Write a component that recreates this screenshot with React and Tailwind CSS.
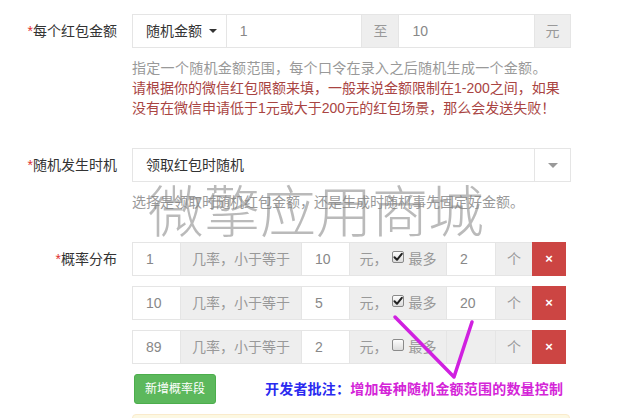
import React from "react";

const B = "border border-[#e5e5e5]";

function Caret({ color = "border-t-[#333]", size = "border-t-[4px] border-x-[4px]" }) {
  return <span className={`inline-block w-0 h-0 border-x-transparent ${size} ${color}`} />;
}

function Check({ checked }) {
  return (
    <span className="inline-flex items-center justify-center w-[12px] h-[12px] rounded-[2px] border border-[#8a8a8a] bg-gradient-to-b from-[#fdfdfd] to-[#dcdcdc] ml-[4px] mr-[5px] -translate-y-[2px]">
      {checked && (
        <svg width="10" height="10" viewBox="0 0 10 10">
          <path d="M1.5 5.2 L4 7.8 L8.8 1.8" stroke="#222" strokeWidth="2" fill="none" strokeLinecap="round" strokeLinejoin="round" />
        </svg>
      )}
    </span>
  );
}

function Label({ children }) {
  return (
    <div className="w-[117px] shrink-0 text-right text-[14px] leading-[34px] text-[#333]">
      <span className="text-[#e03030]">*</span>
      {children}
    </div>
  );
}

const rows = [
  { a: "1", b: "10", c: true, d: "2" },
  { a: "10", b: "5", c: true, d: "20" },
  { a: "89", b: "2", c: false, d: "" },
];

export default function App() {
  return (
    <div className="relative w-[628px] h-[418px] overflow-hidden bg-white font-['Liberation_Sans','Noto_Sans_CJK_SC',sans-serif] text-[14px]">
      <div className="pt-[14px]">
        {/* Row 1 */}
        <div className="flex">
          <Label>每个红包金额</Label>
          <div className="ml-[15px]">
            <div className="flex h-[34px] w-[439px]">
              <div className={`w-[95px] ${B} flex items-center pl-[13px] text-[#333]`}>
                随机金额
                <span className="ml-[7px] flex items-center">
                  <Caret />
                </span>
              </div>
              <div className={`w-[136px] ${B} border-l-0 flex items-center pl-[13px] text-[#888]`}>1</div>
              <div className={`-ml-px w-[38px] ${B} bg-[#eee] flex items-center justify-center text-[#999]`}>至</div>
              <div className={`-ml-px w-[137px] ${B} flex items-center pl-[13px] text-[#888]`}>10</div>
              <div className={`-ml-px w-[37px] ${B} bg-[#eee] flex items-center justify-center text-[#999]`}>元</div>
            </div>
            <div className="mt-[10px] leading-[20px] whitespace-nowrap">
              <div className="text-[#999] tracking-[0.3px]">指定一个随机金额范围，每个口令在录入之后随机生成一个金额。</div>
              <div className="text-[#a94442]">请根据你的微信红包限额来填，一般来说金额限制在1-200之间，如果</div>
              <div className="text-[#a94442]">没有在微信申请低于1元或大于200元的红包场景，那么会发送失败！</div>
            </div>
          </div>
        </div>

        {/* Row 2 */}
        <div className="flex mt-[30px]">
          <Label>随机发生时机</Label>
          <div className="ml-[15px]">
            <div className={`flex h-[34px] w-[439px] ${B}`}>
              <div className="flex-1 flex items-center pl-[13px] text-[#333]">领取红包时随机</div>
              <div className="w-[36px] border-l border-[#e5e5e5] flex items-center justify-center">
                <Caret color="border-t-[#999]" size="border-t-[5px] border-x-[5px]" />
              </div>
            </div>
            <div className="mt-[10px] leading-[20px] whitespace-nowrap text-[#999]">
              选择是领取时随机红包金额，还是生成时随机事先固定好金额。
            </div>
          </div>
        </div>

        {/* Row 3 */}
        <div className="flex mt-[30px]">
          <Label>概率分布</Label>
          <div className="ml-[15px]">
            {rows.map((r, i) => (
              <div key={i} className={`flex h-[34px] ${i > 0 ? "mt-[10px]" : ""}`}>
                <div className={`w-[49px] ${B} flex items-center pl-[13px] text-[#888]`}>{r.a}</div>
                <div className={`-ml-px w-[122px] ${B} bg-[#eee] flex items-center justify-center text-[#999]`}>几率，小于等于</div>
                <div className={`-ml-px w-[49px] ${B} flex items-center pl-[13px] text-[#888]`}>{r.b}</div>
                <div className={`-ml-px w-[98px] ${B} bg-[#eee] flex items-center justify-center text-[#999]`}>
                  元，
                  <Check checked={r.c} />
                  最多
                </div>
                <div className={`-ml-px w-[50px] ${B} ${r.d ? "bg-white" : "bg-[#eee]"} flex items-center pl-[13px] text-[#888]`}>{r.d}</div>
                <div className={`-ml-px w-[38px] ${B} bg-[#eee] flex items-center justify-center text-[#999]`}>个</div>
                <div className="-ml-px w-[34px] border border-[#cc4543] bg-[#cc4543] flex items-center justify-center text-white text-[13px] font-bold">
                  ×
                </div>
              </div>
            ))}
            <div className="mt-[10px] flex items-center">
              <button className="ml-[2px] h-[30px] px-[10px] rounded-[3px] bg-[#5cb85c] border border-[#4cae4c] text-white text-[12px]">
                新增概率段
              </button>
              <div className="ml-[49px] font-bold text-[14px] whitespace-nowrap tracking-[0.2px]">
                <span className="text-[#2a2af0]">开发者批注：</span>
                <span className="text-[#d425d8]">增加每种随机金额范围的数量控制</span>
              </div>
            </div>
            <div className="mt-[10px] w-[438px] h-[40px] rounded-[4px] border border-[#faebcc] bg-[#fcf8e3]" />
          </div>
        </div>
      </div>

      {/* watermark */}
      <div className="absolute left-[148px] top-[180px] text-[56px] leading-[56px] font-extralight text-[rgba(130,130,130,0.55)] whitespace-nowrap pointer-events-none font-['Noto_Sans_CJK_SC',sans-serif]">
        微擎应用商城
      </div>

      {/* annotation lines */}
      <svg className="absolute left-0 top-0 pointer-events-none" width="628" height="418">
        <path d="M395 317 L454 377 L472 322" stroke="#d020e0" strokeWidth="3.5" fill="none" strokeLinecap="round" strokeLinejoin="round" />
      </svg>
    </div>
  );
}
